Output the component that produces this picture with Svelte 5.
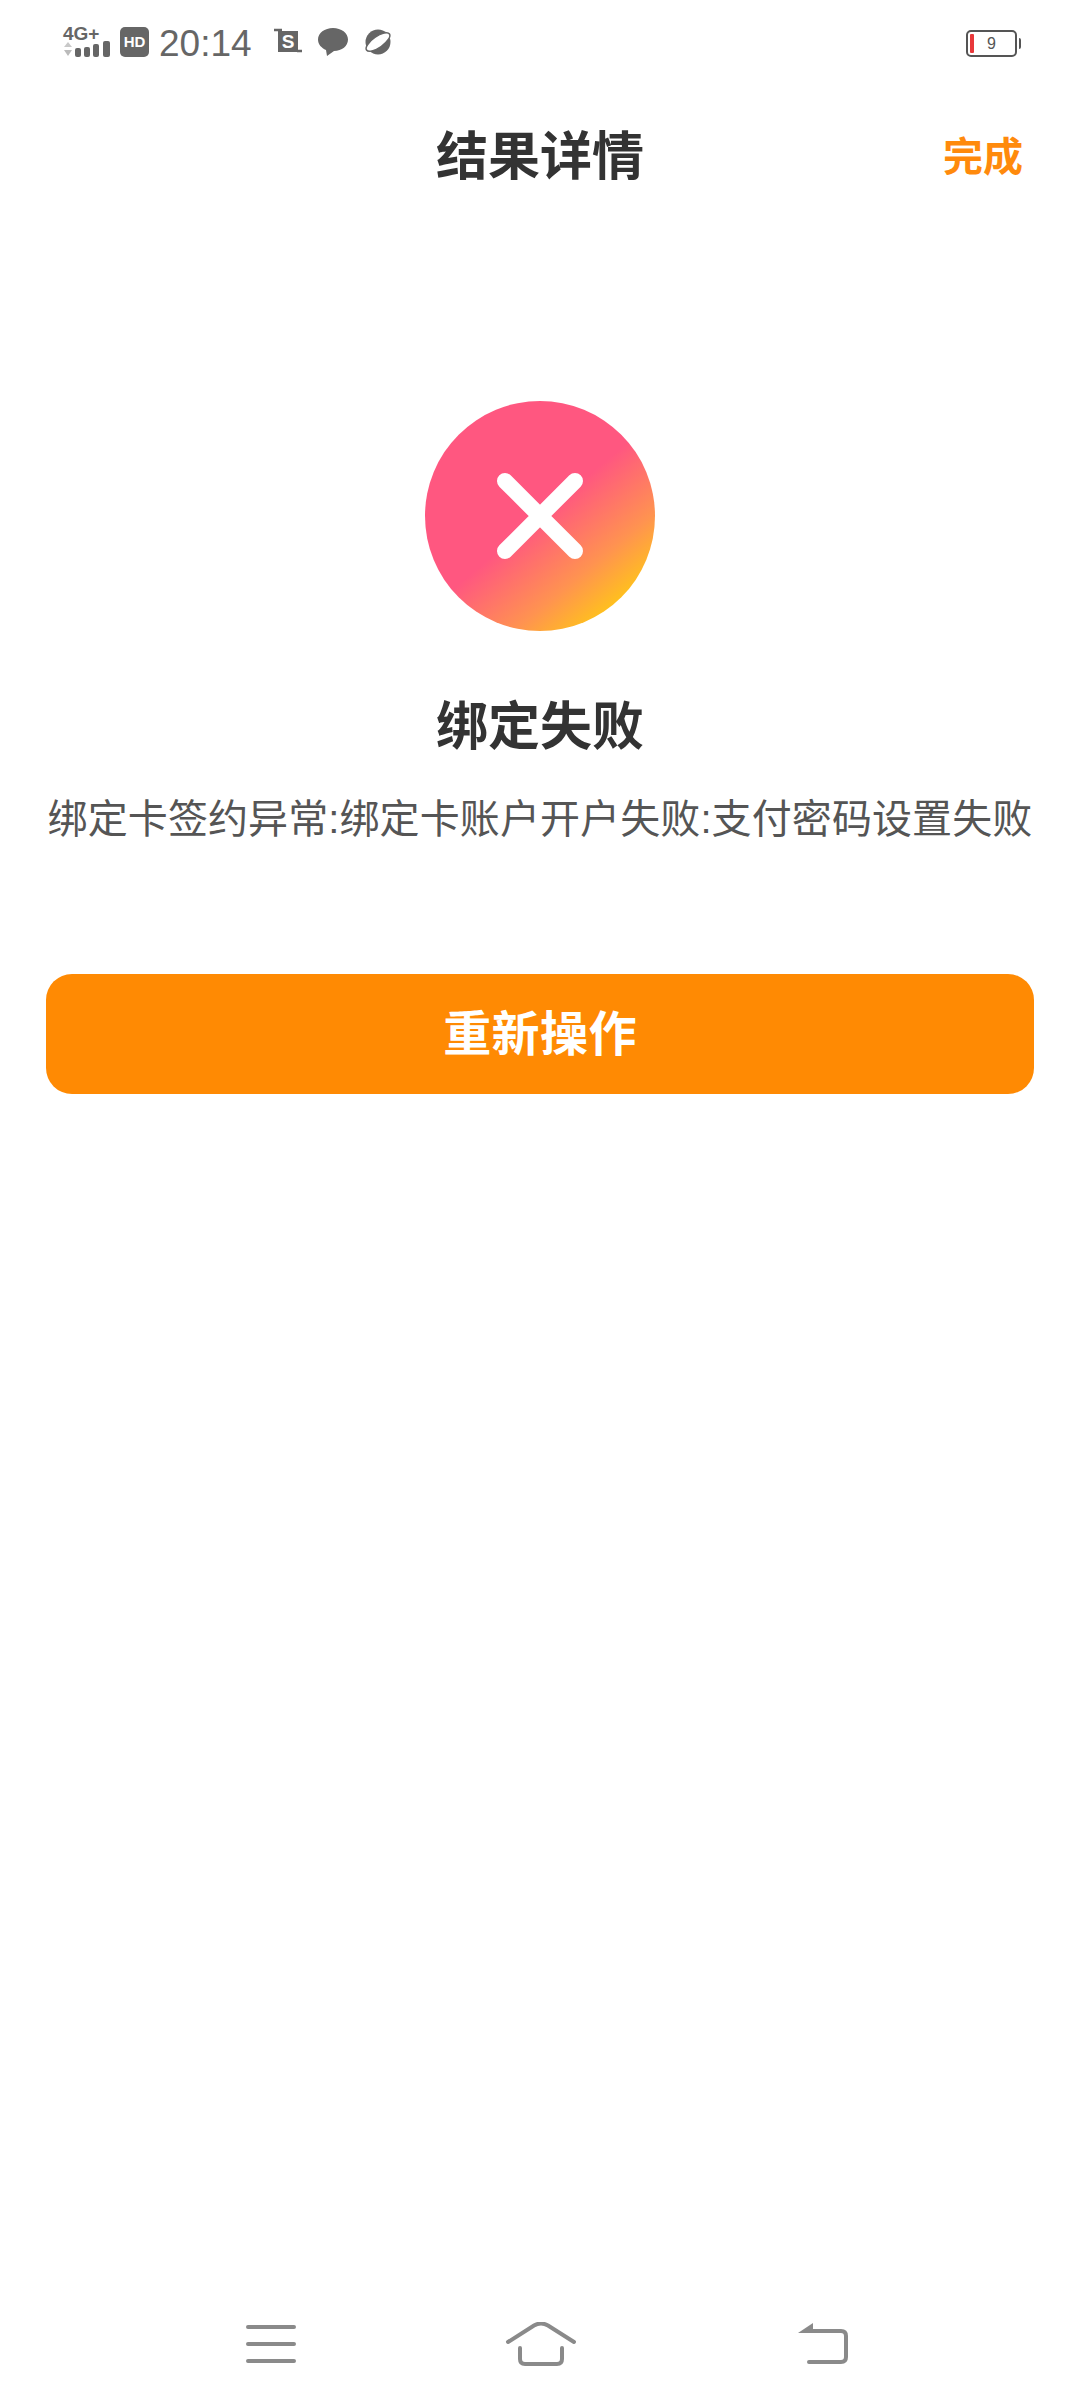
<script>
  const title = '结果详情';
</script>

<div class="page">
  <header class="status">
    <div class="left">
      <svg class="net" viewBox="0 0 48 32" width="48" height="32" aria-hidden="true">
        <text x="0" y="14" class="net-text">4G+</text>
        <path d="M5 16l4 5H1z" fill="#c8c8c8"/>
        <path d="M1 24h8l-4 6z" fill="#bbb"/>
        <rect x="12" y="22" width="6" height="9" rx="2" fill="#666"/>
        <rect x="21" y="21" width="6" height="10" rx="2" fill="#666"/>
        <rect x="30" y="18" width="6" height="13" rx="2" fill="#666"/>
        <rect x="40" y="15" width="7" height="16" rx="2" fill="#666"/>
      </svg>
      <span class="hd">HD</span>
      <span class="time">20:14</span>
      <svg class="crop" viewBox="0 0 28 28" width="28" height="28" aria-hidden="true">
        <rect x="4" y="3" width="20" height="21" fill="#666"/>
        <path d="M0 2h8M23 23h5" stroke="#666" stroke-width="2.500" fill="none"/>
        <text x="14" y="20" class="crop-text">S</text>
      </svg>
      <svg class="bubble" viewBox="0 0 30 28" width="30" height="28" aria-hidden="true">
        <path d="M15 0C6.700 0 0 5 0 11.500 0 16.500 3.600 20 8 22l1 6 7-5c8 0 14-5 14-11.500S23.300 0 15 0z" fill="#666"/>
      </svg>
      <svg class="planet" viewBox="0 0 30 26" width="30" height="26" aria-hidden="true">
        <circle cx="15" cy="13" r="12.500" fill="#666"/>
        <ellipse cx="15" cy="13" rx="14" ry="5.500" transform="rotate(-35 15 13)" fill="#fff" stroke="#666" stroke-width="1.500"/>
      </svg>
    </div>
    <div class="battery">
      <span class="level"></span>
      <span class="pct">9</span>
    </div>
  </header>

  <nav class="bar">
    <h1>{title}</h1>
    <span class="done">完成</span>
  </nav>

  <main class="result">
    <div class="icon">
      <svg viewBox="0 0 90 90" width="90" height="90" aria-hidden="true">
        <path d="M10 10l70 70M80 10L10 80" stroke="#fff" stroke-width="16" stroke-linecap="round"/>
      </svg>
    </div>
    <h2>绑定失败</h2>
    <p>绑定卡签约异常:绑定卡账户开户失败:支付密码设置失败</p>
    <button type="button">重新操作</button>
  </main>

  <footer class="navkeys">
    <svg class="menu" viewBox="0 0 50 38" width="50" height="38" aria-hidden="true">
      <path d="M2 2h46M2 19h46M2 36h46" stroke="#8a8a8a" stroke-width="4" stroke-linecap="round"/>
    </svg>
    <svg class="home" viewBox="0 0 72 44" width="72" height="44" aria-hidden="true">
      <path d="M3 20L29 3.500q7-4 14 0L69 20M15 26v11q0 5 5 5h32q5 0 5-5V26" stroke="#8a8a8a" stroke-width="4" stroke-linecap="round" fill="none"/>
    </svg>
    <svg class="back" viewBox="0 0 52 44" width="52" height="44" aria-hidden="true">
      <path d="M12 9h32q5 0 5 5v21q0 5-5 5H12" stroke="#8a8a8a" stroke-width="4" stroke-linecap="round" fill="none"/>
      <path d="M16 1v10H1z" fill="#8a8a8a"/>
    </svg>
  </footer>
</div>

<style>
  :global(body) {
    margin: 0;
    background: #fff;
  }

  .page {
    width: 1080px;
    height: 2408px;
    display: flex;
    flex-direction: column;
    background: #fff;
    font-family: "Liberation Sans", "Noto Sans CJK SC", sans-serif;
    color: #333;
  }

  .status {
    height: 86px;
    box-sizing: border-box;
    padding: 26px 63px 0 63px;
    display: flex;
    justify-content: space-between;
    align-items: flex-start;
    flex: none;
  }

  .left {
    display: flex;
    align-items: center;
    height: 32px;
  }

  .net { overflow: visible; }

  .net-text {
    font: bold 19px "Liberation Sans", sans-serif;
    fill: #666;
  }

  .hd {
    margin-left: 9px;
    width: 29px;
    height: 30px;
    border-radius: 5px;
    background: #666;
    color: #fff;
    font-size: 15px;
    font-weight: bold;
    line-height: 30px;
    text-align: center;
  }

  .time {
    margin: 4px 0 0 10px;
    font-size: 37px;
    color: #666;
    line-height: 32px;
  }

  .crop {
    margin-left: 22px;
  }

  .crop-text {
    font: bold 19px "Liberation Sans", sans-serif;
    fill: #fff;
    text-anchor: middle;
  }

  .bubble {
    margin-left: 16px;
  }

  .planet {
    margin-left: 15px;
  }

  .battery {
    width: 51px;
    height: 27px;
    margin-top: 4px;
    box-sizing: border-box;
    border: 2px solid #555;
    border-radius: 5px;
    position: relative;
    display: flex;
    align-items: center;
    justify-content: center;
  }

  .battery::after {
    content: "";
    position: absolute;
    right: -6px;
    top: 6px;
    width: 2px;
    height: 11px;
    background: #555;
    border-radius: 0 2px 2px 0;
  }

  .level {
    position: absolute;
    left: 2px;
    top: 2px;
    bottom: 2px;
    width: 4px;
    background: #e8383a;
    border-radius: 1px;
  }

  .pct {
    font-size: 16px;
    color: #555;
    line-height: 1;
  }

  .bar {
    flex: none;
    height: 142px;
    display: grid;
    grid-template-columns: 1fr auto 1fr;
    align-items: center;
  }

  h1 {
    grid-column: 2;
    margin: 0;
    font-size: 52px;
    font-weight: bold;
    color: #333;
    line-height: 1;
  }

  .done {
    grid-column: 3;
    justify-self: end;
    margin-right: 57px;
    font-size: 40px;
    font-weight: bold;
    color: #ff8a0c;
    line-height: 1;
  }

  .result {
    flex: 1;
    display: flex;
    flex-direction: column;
    align-items: center;
    padding: 173px 46px 0;
  }

  .icon {
    width: 230px;
    height: 230px;
    border-radius: 50%;
    background: linear-gradient(140deg, #ff5780 0%, #ff5780 50%, #ff9350 72%, #ffcb12 89%);
    display: flex;
    align-items: center;
    justify-content: center;
  }

  h2 {
    margin: 58px 0 0;
    font-size: 52px;
    font-weight: bold;
    color: #333;
    line-height: 76px;
  }

  p {
    margin: 24px 0 0;
    font-size: 40px;
    letter-spacing: 0.1px;
    color: #555;
    line-height: 60px;
    white-space: nowrap;
  }

  button {
    margin-top: 125px;
    width: 988px;
    height: 120px;
    border: 0;
    border-radius: 26px;
    padding: 0 0 8px;
    background: #ff8a03;
    color: #fff;
    font: bold 48px "Liberation Sans", "Noto Sans CJK SC", sans-serif;
    letter-spacing: 0.4px;
  }

  .navkeys {
    flex: none;
    height: 44px;
    padding: 0 0 42px 246px;
    display: flex;
    align-items: center;
  }

  .home {
    margin-left: 209px;
  }

  .back {
    margin-left: 220px;
  }
</style>
